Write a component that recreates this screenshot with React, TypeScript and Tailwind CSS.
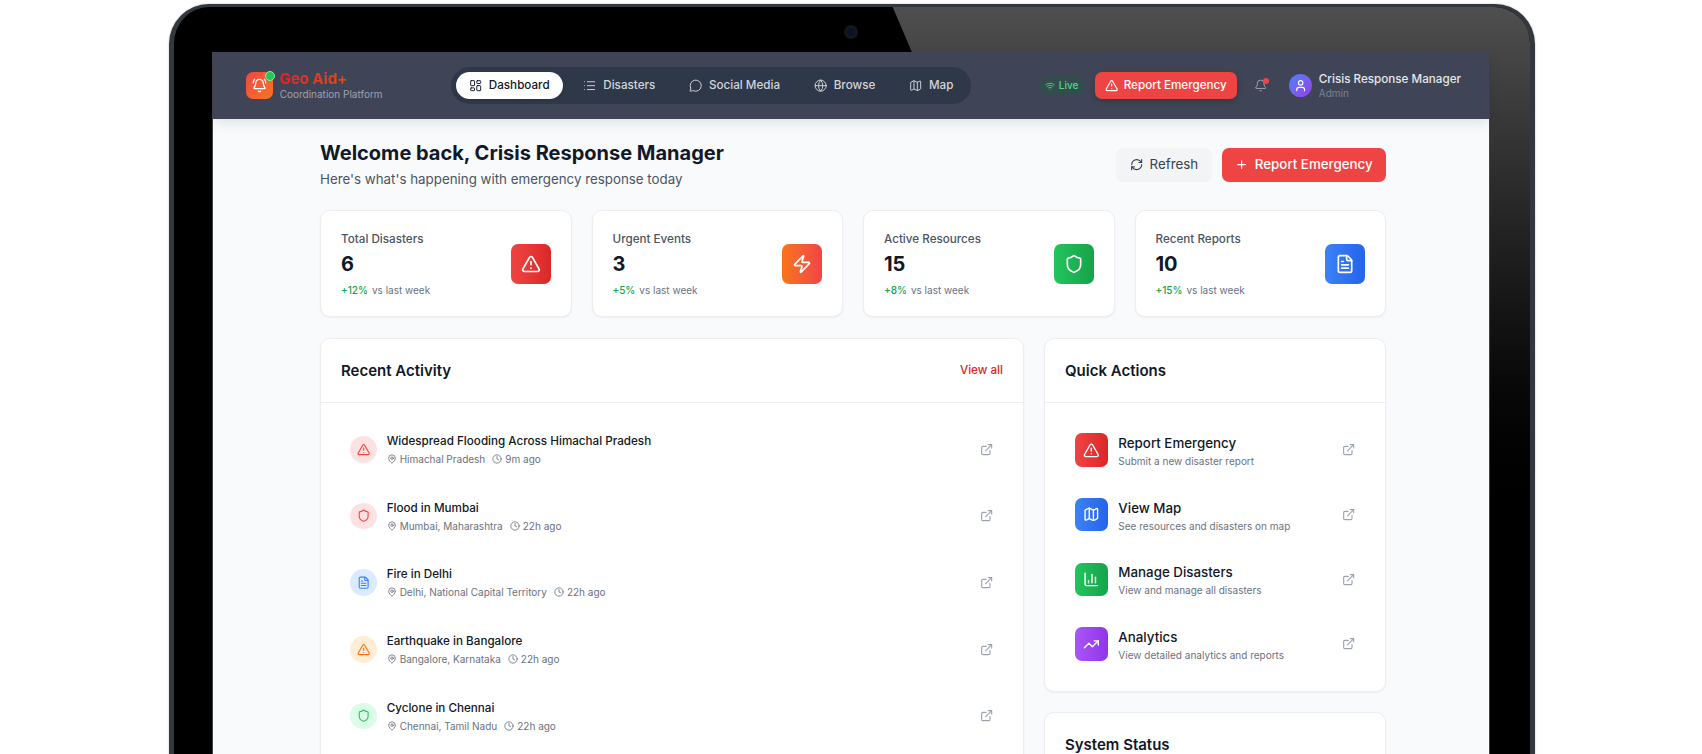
import { AlertTriangle, BarChart3, Bell, BellRing, Clock, ExternalLink, FileText, Globe, LayoutDashboard, List, Map as MapIcon, MapPin, MessageCircle, Plus, RefreshCw, Shield, TrendingUp, User, Wifi, Zap } from "lucide-react";

const nav = [
  { label: "Dashboard", icon: LayoutDashboard, active: true },
  { label: "Disasters", icon: List },
  { label: "Social Media", icon: MessageCircle },
  { label: "Browse", icon: Globe },
  { label: "Map", icon: MapIcon },
];

const red = "bg-gradient-to-r from-[#ef4444] to-[#dc2626]";
const blue = "bg-gradient-to-r from-[#3b82f6] to-[#2563eb]";
const green = "bg-gradient-to-r from-[#22c55e] to-[#16a34a]";
const purple = "bg-gradient-to-r from-[#a855f7] to-[#9333ea]";

const stats = [
  { label: "Total Disasters", value: "6", change: "+12%", icon: AlertTriangle, bg: red },
  { label: "Urgent Events", value: "3", change: "+5%", icon: Zap, bg: "bg-gradient-to-r from-[#f97316] to-[#ef4444]" },
  { label: "Active Resources", value: "15", change: "+8%", icon: Shield, bg: green },
  { label: "Recent Reports", value: "10", change: "+15%", icon: FileText, bg: blue },
];

const activity = [
  { title: "Widespread Flooding Across Himachal Pradesh", place: "Himachal Pradesh", time: "9m ago", icon: AlertTriangle, cls: "bg-[#fee2e2] text-[#ef4444]" },
  { title: "Flood in Mumbai", place: "Mumbai, Maharashtra", time: "22h ago", icon: Shield, cls: "bg-[#fee2e2] text-[#ef4444]" },
  { title: "Fire in Delhi", place: "Delhi, National Capital Territory", time: "22h ago", icon: FileText, cls: "bg-[#dbeafe] text-[#3b82f6]" },
  { title: "Earthquake in Bangalore", place: "Bangalore, Karnataka", time: "22h ago", icon: AlertTriangle, cls: "bg-[#ffedd5] text-[#f97316]" },
  { title: "Cyclone in Chennai", place: "Chennai, Tamil Nadu", time: "22h ago", icon: Shield, cls: "bg-[#dcfce7] text-[#22c55e]" },
];

const actions = [
  { title: "Report Emergency", sub: "Submit a new disaster report", icon: AlertTriangle, bg: red },
  { title: "View Map", sub: "See resources and disasters on map", icon: MapIcon, bg: blue },
  { title: "Manage Disasters", sub: "View and manage all disasters", icon: BarChart3, bg: green },
  { title: "Analytics", sub: "View detailed analytics and reports", icon: TrendingUp, bg: purple },
];

const cardCls = "rounded-[10px] border border-[#eceef1] bg-white shadow-[0_1px_2px_rgba(0,0,0,0.06)]";

function Header() {
  return (
    <header className="relative z-10 flex h-[67px] shrink-0 items-center bg-[#3f4556] pl-[33px] pr-[28px] shadow-[0_4px_12px_rgba(0,0,0,0.1)]">
      <div className="flex w-[204.5px] shrink-0 items-center gap-[6.67px]">
        <div className="relative flex h-[27px] w-[27px] items-center justify-center rounded-[7px] bg-gradient-to-br from-[#ef4444] to-[#f97316] text-white">
          <BellRing size={15} strokeWidth={2} />
          <span className="absolute -right-[2px] -top-[1px] h-[10px] w-[10px] rounded-full border border-[#86efac] bg-[#22c55e]" />
        </div>
        <div>
          <div className="bg-gradient-to-r from-[#dc2626] to-[#ea580c] bg-clip-text text-[15px] font-bold leading-[17px] text-transparent">Geo Aid+</div>
          <div className="text-[10px] leading-[14px] text-[#9ca3af]">Coordination Platform</div>
        </div>
      </div>
      <nav className="flex h-[37px] w-[520px] items-center gap-[7px] rounded-full bg-[#2f3849] pl-[5px]">
        {nav.map(({ label, icon: Icon, active }) => (
          <div key={label} className={`flex h-[26.67px] items-center gap-[6.67px] rounded-full px-[13.33px] text-[11.67px] font-medium ${active ? "bg-white text-[#111827] shadow-sm" : "text-[#d1d5db]"}`}>
            <Icon size={13.33} strokeWidth={1.75} />
            <span>{label}</span>
          </div>
        ))}
      </nav>
      <div className="ml-auto flex items-center">
        <div className="flex h-[20px] w-[46px] items-center justify-center gap-[3.33px] rounded-full bg-[#334c4e] text-[10px] font-medium text-[#4ade80]">
          <Wifi size={10} />
          <span>Live</span>
        </div>
        <div className="ml-[10px] flex h-[27px] items-center gap-[5px] rounded-[7px] bg-[#ef4444] px-[10.5px] text-[11.67px] font-medium text-white shadow-[0_2px_6px_rgba(0,0,0,0.2)]">
          <AlertTriangle size={13.33} />
          <span>Report Emergency</span>
        </div>
        <div className="relative ml-[17px] text-[#9ca3af]">
          <Bell size={13.33} strokeWidth={1.75} />
          <span className="absolute -right-[1px] -top-[1px] h-[6px] w-[6px] rounded-full bg-[#ef4444]" />
        </div>
        <div className="ml-[21px] flex h-[23.5px] w-[23.5px] items-center justify-center rounded-full bg-gradient-to-br from-[#3b82f6] to-[#9333ea] text-white">
          <User size={13.33} />
        </div>
        <div className="ml-[6.67px]">
          <div className="text-[11.67px] font-medium leading-[15px] text-[#e5e7eb]">Crisis Response Manager</div>
          <div className="text-[10px] leading-[13px] text-[#7b8290]">Admin</div>
        </div>
      </div>
    </header>
  );
}

function Stat({ s }: { s: (typeof stats)[number] }) {
  const Icon = s.icon;
  return (
    <div className={`flex h-[107px] items-center justify-between px-5 ${cardCls}`}>
      <div>
        <div className="text-[11.67px] font-medium leading-[16px] text-[#4b5563]">{s.label}</div>
        <div className="mt-[3px] text-[20px] font-bold leading-[28px] text-[#111827]">{s.value}</div>
        <div className="mt-[5px] flex gap-[4px] text-[10px] leading-[14px]">
          <span className="font-medium text-[#16a34a]">{s.change}</span>
          <span className="text-[#6b7280]">vs last week</span>
        </div>
      </div>
      <div className={`flex h-10 w-10 items-center justify-center rounded-[7px] text-white ${s.bg}`}>
        <Icon size={20} />
      </div>
    </div>
  );
}

export default function App() {
  return (
    <div className="h-[754px] w-[1702px] overflow-hidden bg-white font-['Inter',sans-serif]">
      <div className="ml-[169px] mt-[4px] w-[1366px]">
        <div className="relative h-[800px] rounded-t-[40px] border-x-[5px] border-t-[3px] border-[#33383f] bg-black pl-[39px] pr-[41px] pt-[45px] shadow-[0_0_2px_rgba(0,0,0,0.3)]">
          <div className="absolute inset-0 rounded-t-[36px] bg-gradient-to-b from-[#4f4f4f] to-black to-[70%] [clip-path:polygon(53%_0,100%_0,100%_100%,97%_100%,97%_6%,54.5%_6%)]" />
          <div className="absolute left-[670px] top-[18px] h-[14px] w-[14px] rounded-full border-[3px] border-[#14161b] bg-[#0b1526]" />
          <div className="relative flex h-full flex-col bg-[#f9fafb] shadow-[1px_0_0_#444444,-1px_0_0_#444444]">
            <Header />
            <main className="ml-[107px] w-[1066px] pt-[20px]">
              <div className="flex items-start justify-between">
                <div>
                  <h1 className="text-[20px] font-bold leading-[28px] text-[#111827]">Welcome back, Crisis Response Manager</h1>
                  <p className="mt-[2px] text-[13.33px] leading-[20px] text-[#4b5563]">Here's what's happening with emergency response today</p>
                </div>
                <div className="mt-[8.5px] flex gap-[10px] text-[13.33px]">
                  <div className="flex h-[34px] items-center gap-[6.67px] rounded-[7px] bg-[#f3f4f6] px-[13.33px] text-[#374151]">
                    <RefreshCw size={13.33} />
                    <span>Refresh</span>
                  </div>
                  <div className="flex h-[34px] items-center gap-[6.67px] rounded-[7px] bg-[#ef4444] px-[13.33px] font-medium text-white">
                    <Plus size={13.33} />
                    <span>Report Emergency</span>
                  </div>
                </div>
              </div>
              <div className="mt-[21px] grid grid-cols-4 gap-5">
                {stats.map((s) => <Stat key={s.label} s={s} />)}
              </div>
              <div className="mt-[21px] grid grid-cols-3 gap-5">
                <section className={`col-span-2 ${cardCls}`}>
                  <div className="flex h-[64px] items-center justify-between border-b border-[#eceef1] px-5">
                    <h2 className="text-[15px] font-semibold leading-[18px] text-[#111827]">Recent Activity</h2>
                    <span className="text-[11.67px] font-medium text-[#dc2626]">View all</span>
                  </div>
                  <div className="flex flex-col gap-[9.67px] py-[18px] pl-[29px] pr-[30px]">
                    {activity.map((a) => {
                      const Icon = a.icon;
                      return (
                        <div key={a.title} className="flex h-[57px] items-center">
                          <div className={`flex h-[26.67px] w-[26.67px] shrink-0 items-center justify-center rounded-full ${a.cls}`}>
                            <Icon size={13.33} />
                          </div>
                          <div className="ml-[10px] flex-1">
                            <div className="text-[11.67px] font-medium leading-[16px] text-[#111827]">{a.title}</div>
                            <div className="mt-[3px] flex items-center text-[10px] leading-[14px] text-[#6b7280]">
                              <MapPin size={10} />
                              <span className="ml-[3px]">{a.place}</span>
                              <Clock size={10} className="ml-[7px]" />
                              <span className="ml-[3px]">{a.time}</span>
                            </div>
                          </div>
                          <ExternalLink size={13.33} className="text-[#9ca3af]" />
                        </div>
                      );
                    })}
                  </div>
                </section>
                <div className="flex flex-col gap-5">
                  <section className={cardCls}>
                    <div className="flex h-[64px] items-center border-b border-[#eceef1] px-5">
                      <h2 className="text-[15px] font-semibold leading-[18px] text-[#111827]">Quick Actions</h2>
                    </div>
                    <div className="flex flex-col gap-[31px] p-[30px]">
                      {actions.map((a) => {
                        const Icon = a.icon;
                        return (
                          <div key={a.title} className="flex h-[33.7px] items-center">
                            <div className={`flex h-[33.33px] w-[33.33px] shrink-0 items-center justify-center rounded-[7px] text-white ${a.bg}`}>
                              <Icon size={16.67} />
                            </div>
                            <div className="ml-[10px] flex-1 pt-[2px]">
                              <div className="text-[13.33px] font-medium leading-[18px] text-[#111827]">{a.title}</div>
                              <div className="mt-[2px] text-[10px] leading-[14px] text-[#6b7280]">{a.sub}</div>
                            </div>
                            <ExternalLink size={13.33} className="text-[#9ca3af]" />
                          </div>
                        );
                      })}
                    </div>
                  </section>
                  <section className={`h-[100px] ${cardCls}`}>
                    <div className="flex h-[64px] items-center px-5">
                      <h2 className="text-[15px] font-semibold leading-[18px] text-[#111827]">System Status</h2>
                    </div>
                  </section>
                </div>
              </div>
            </main>
          </div>
        </div>
      </div>
    </div>
  );
}
